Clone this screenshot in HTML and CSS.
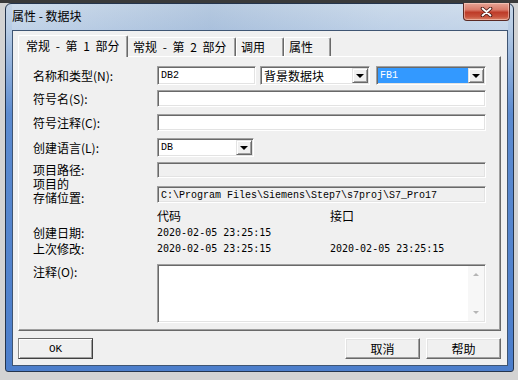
FILE: index.html
```html
<!DOCTYPE html>
<html lang="zh-CN">

<head>
    <meta charset="UTF-8">
    <meta name="viewport" content="width=device-width, initial-scale=1.0">
    <title>属性 - 数据块</title>
    <link rel="stylesheet" href="styles.css">
</head>

<body>
    <div class="window">
        <div class="titlebar">
            <span class="title">属性 - 数据块</span>
            <div class="close">
                <svg width="13" height="10" viewBox="0 0 13 10">
                    <path d="M2.5 1.5 L10.5 8.5 M10.5 1.5 L2.5 8.5" stroke="#4a1a14" stroke-width="3.6" stroke-linecap="round" fill="none" />
                    <path d="M2.5 1.5 L10.5 8.5 M10.5 1.5 L2.5 8.5" stroke="#ffffff" stroke-width="1.8" stroke-linecap="round" fill="none" />
                </svg>
            </div>
        </div>

        <div class="client">
            <div class="tabs">
                <div class="tab active">常规 - 第 1 部分</div>
                <div class="tab tab-2">常规 - 第 2 部分</div>
                <div class="tab tab-3">调用</div>
                <div class="tab tab-4">属性</div>
            </div>

            <div class="panel">
                <div class="row r1">
                    <span class="lbl">名称和类型(N):</span>
                    <div class="edit name mono">DB2</div>
                    <div class="combo type">
                        <span class="combo-text">背景数据块</span>
                        <span class="drop"><i class="arrow"></i></span>
                    </div>
                    <div class="combo fb">
                        <span class="combo-text mono selected">FB1</span>
                        <span class="drop"><i class="arrow"></i></span>
                    </div>
                </div>

                <div class="row r2">
                    <span class="lbl">符号名(S):</span>
                    <div class="edit full"></div>
                </div>

                <div class="row r3">
                    <span class="lbl">符号注释(C):</span>
                    <div class="edit full"></div>
                </div>

                <div class="row r4">
                    <span class="lbl">创建语言(L):</span>
                    <div class="combo lang">
                        <span class="combo-text mono">DB</span>
                        <span class="drop"><i class="arrow"></i></span>
                    </div>
                </div>

                <div class="row r5">
                    <span class="lbl">项目路径:</span>
                    <div class="edit full disabled"></div>
                </div>

                <div class="row r6">
                    <span class="lbl two-line">项目的<br>存储位置:</span>
                    <div class="edit full disabled path mono">C:\Program Files\Siemens\Step7\s7proj\S7_Pro17</div>
                </div>

                <div class="row r7">
                    <span class="lbl"></span>
                    <span class="val">代码</span>
                    <span class="val">接口</span>
                </div>

                <div class="row r8">
                    <span class="lbl">创建日期:</span>
                    <span class="val date">2020-02-05 23:25:15</span>
                </div>

                <div class="row r9">
                    <span class="lbl">上次修改:</span>
                    <span class="val date">2020-02-05 23:25:15</span>
                    <span class="val date">2020-02-05 23:25:15</span>
                </div>

                <div class="row r10">
                    <span class="lbl memo-lbl">注释(O):</span>
                    <div class="edit full memo">
                        <div class="vscroll">
                            <i class="caret up"></i>
                            <i class="caret down"></i>
                        </div>
                    </div>
                </div>
            </div>

            <div class="buttons">
                <button type="button" class="btn default mono">OK</button>
                <button type="button" class="btn cancel">取消</button>
                <button type="button" class="btn">帮助</button>
            </div>
        </div>
    </div>
</body>

</html>
```

FILE: styles.css
```css
body {
    margin: 0;
    height: 380px;
    overflow: hidden;
    background: linear-gradient(#3a3a3a 0, #3a3a3a 3px, #d3d3d3 3px);
    font-family: "Noto Sans CJK SC", sans-serif;
    font-size: 12px;
    color: #000;
}

.mono {
    font-family: "Liberation Mono", monospace;
    font-size: 10px;
}

/* window frame */
.window {
    box-sizing: border-box;
    width: 509px;
    height: 369px;
    margin: 3px 0 0 5px;
    padding: 0 5px 5px 6px;
    border: 1px solid #24344c;
    border-radius: 6px 6px 3px 3px;
    background: linear-gradient(180deg, #c6d6e8 0, #b6cbe4 26px, #9cb9df 50px, #5c8bd0 110px, #4c7ecb 100%);
}

.titlebar {
    height: 26px;
    display: flex;
    justify-content: space-between;
    align-items: flex-start;
    background: linear-gradient(90deg, rgba(255, 255, 255, 0.15), rgba(120, 150, 190, 0.2) 40%, rgba(255, 255, 255, 0.1) 75%, rgba(255, 255, 255, 0.2));
}

.title {
    padding-top: 5px;
    line-height: 14px;
}

.close {
    box-sizing: border-box;
    width: 47px;
    height: 18px;
    margin: -1px -2px 0 0;
    border: 1px solid #5b2a24;
    border-top: none;
    border-radius: 0 0 4px 4px;
    background: linear-gradient(180deg, #e7a596 0, #d97a69 40%, #be3b28 55%, #c8523c 80%, #d9836a 100%);
    box-shadow: inset 0 0 0 1px rgba(255, 220, 210, 0.5);
    display: flex;
    align-items: center;
    justify-content: center;
}

/* client area */
.client {
    box-sizing: border-box;
    height: 336px;
    padding: 4px 6px 6px 5px;
    border: 1px solid #3f5573;
    background: #f0f0f0;
}

.tabs {
    display: flex;
    height: 21px;
    position: relative;
    z-index: 1;
}

.tab {
    box-sizing: border-box;
    height: 19px;
    margin-top: 2px;
    padding-left: 4px;
    line-height: 18px;
    word-spacing: 3px;
    border-top: 1px solid #fff;
    border-left: 1px solid #fff;
    border-right: 1px solid #696969;
    border-radius: 2px 2px 0 0;
    box-shadow: inset -1px 0 #a0a0a0;
    white-space: nowrap;
}

.tab.active {
    width: 110px;
    height: 22px;
    margin-top: 0;
    padding-left: 7px;
    padding-top: 1px;
    background: #f0f0f0;
}

.tab-2 {
    width: 108px;
    border-left-color: #f0f0f0;
}

.tab-3 {
    width: 48px;
}

.tab-4 {
    width: 47px;
}

.panel {
    box-sizing: border-box;
    height: 275px;
    padding: 9px 14px 0 14px;
    border: 1px solid;
    border-color: #fff #696969 #696969 #fff;
    box-shadow: inset -1px -1px #a0a0a0;
}

/* form rows */
.row {
    display: flex;
    align-items: center;
}

.lbl {
    width: 124px;
    flex: none;
    line-height: 14px;
    white-space: nowrap;
}

.two-line {
    line-height: 14px;
}

.r1 { height: 19px; }
.r2 { height: 17px; margin-top: 5px; }
.r3 { height: 17px; margin-top: 7px; }
.r4 { height: 19px; margin-top: 7px; }
.r5 { height: 16px; margin-top: 5px; }
.r6 { height: 28px; margin-top: -1px; }
.r7 { height: 14px; margin-top: 4px; }
.r8 { height: 14px; margin-top: 3px; }
.r9 { height: 14px; margin-top: 2px; }
.r10 { height: 59px; margin-top: 8px; align-items: flex-start; }

.memo-lbl {
    margin-top: 1px;
}

.val {
    width: 173px;
    flex: none;
    line-height: 14px;
    white-space: nowrap;
}

.date {
    font-family: "DejaVu Sans Mono", monospace;
    font-size: 10px;
}

/* sunken boxes */
.edit,
.combo {
    box-sizing: border-box;
    height: 100%;
    padding: 1px;
    background: #fff;
    border: 1px solid;
    border-color: #a0a0a0 #fff #fff #a0a0a0;
    box-shadow: inset 1px 1px #696969, inset -1px -1px #e3e3e3;
}

.edit {
    padding-left: 3px;
    line-height: 15px;
    white-space: nowrap;
}

.edit.name {
    width: 99px;
}

.full {
    width: 329px;
}

.disabled {
    background: #f0f0f0;
}

.path {
    align-self: flex-end;
    height: 17px;
    margin-bottom: 2px;
    padding-left: 3px;
}

.combo {
    display: flex;
}

.combo.type {
    width: 110px;
    margin-left: 4px;
}

.combo.fb {
    width: 110px;
    margin-left: 6px;
}

.combo.lang {
    width: 97px;
}

.combo-text {
    flex: 1;
    padding-left: 2px;
    line-height: 15px;
    white-space: nowrap;
}

.combo-text.selected {
    background: #3399ff;
    color: #fff;
}

.drop {
    box-sizing: border-box;
    width: 16px;
    flex: none;
    background: #f0f0f0;
    border: 1px solid;
    border-color: #e3e3e3 #696969 #696969 #e3e3e3;
    box-shadow: inset 1px 1px #fff, inset -1px -1px #a0a0a0;
    display: flex;
    align-items: center;
    justify-content: center;
}

.arrow {
    width: 0;
    height: 0;
    border-left: 4px solid transparent;
    border-right: 4px solid transparent;
    border-top: 4px solid #000;
}

/* memo box */
.memo {
    display: flex;
    justify-content: flex-end;
    padding: 1px;
}

.vscroll {
    width: 16px;
    background: #f7f7f7;
    display: flex;
    flex-direction: column;
    justify-content: space-between;
    align-items: center;
    padding: 7px 0;
    box-sizing: border-box;
}

.caret {
    width: 0;
    height: 0;
    border-left: 3px solid transparent;
    border-right: 3px solid transparent;
}

.caret.up {
    border-bottom: 3px solid #b5b5b5;
}

.caret.down {
    border-top: 3px solid #b5b5b5;
}

/* buttons */
.buttons {
    display: flex;
    gap: 6px;
    height: 21px;
    margin-top: 7px;
}

.btn {
    box-sizing: border-box;
    width: 75px;
    height: 21px;
    padding: 0;
    font-family: "Noto Sans CJK SC", sans-serif;
    font-size: 12px;
    color: #000;
    background: #f0f0f0;
    border: 1px solid;
    border-color: #fff #696969 #696969 #fff;
    box-shadow: inset -1px -1px #a0a0a0, inset 1px 1px #e3e3e3;
}

.btn.default {
    border-color: #6a6a6a #404040 #404040 #8a8a8a;
    box-shadow: inset 1px 1px #fff, inset -1px -1px #a0a0a0;
    font-family: "Liberation Mono", monospace;
    font-size: 11px;
}

.btn.cancel {
    margin-left: auto;
}
```
